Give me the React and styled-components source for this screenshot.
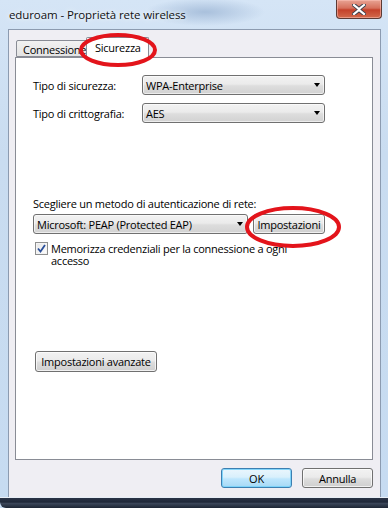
import styled, { createGlobalStyle } from "styled-components";

const GlobalStyle = createGlobalStyle`
  html, body {
    margin: 0;
    padding: 0;
    background: #1d2634;
  }
  body {
    font-family: "Open Sans", "Noto Sans", sans-serif;
    font-size: 11px;
    letter-spacing: -0.25px;
    color: #000;
  }
`;

const App = () => {
  return (
    <>
      <GlobalStyle />
      <Window>
        <TitleBar>
          <Title>eduroam - Proprietà rete wireless</Title>
          <CloseButton>
            <svg width="14" height="11" viewBox="0 0 14 11">
              <path
                d="M2 1 L7 5 L12 1 M2 10 L7 6 L12 10"
                stroke="#3a3f4a"
                strokeWidth="4"
                fill="none"
                strokeLinecap="square"
              />
              <path
                d="M2 1 L7 5 L12 1 M2 10 L7 6 L12 10"
                stroke="#fff"
                strokeWidth="2.2"
                fill="none"
                strokeLinecap="square"
              />
            </svg>
          </CloseButton>
        </TitleBar>
        <Client>
          <TabStrip>
            <Tab>Connessione</Tab>
            <Tab $active>
              Sicurezza
              <Circle $w={78} $h={34} $left={-8} $top={-5}>
                <ellipse cx="39" cy="17" rx="37" ry="15" />
              </Circle>
            </Tab>
          </TabStrip>
          <Panel>
            <FieldRow>
              <Label>Tipo di sicurezza:</Label>
              <Combo $width={183}>
                WPA-Enterprise
                <Arrow />
              </Combo>
            </FieldRow>
            <FieldRow $gap={8}>
              <Label>Tipo di crittografia:</Label>
              <Combo $width={183}>
                AES
                <Arrow />
              </Combo>
            </FieldRow>
            <MethodLabel>Scegliere un metodo di autenticazione di rete:</MethodLabel>
            <MethodRow>
              <Combo $width={215}>
                Microsoft: PEAP (Protected EAP)
                <Arrow />
              </Combo>
              <Button $width={72} $height={20}>
                Impostazioni
                <Circle $w={96} $h={42} $left={-9} $top={-9}>
                  <ellipse cx="48" cy="21" rx="46" ry="19" />
                </Circle>
              </Button>
            </MethodRow>
            <CheckRow>
              <CheckBox>
                <svg width="9" height="9" viewBox="0 0 9 9">
                  <path
                    d="M1 4.5 L3.5 7.5 L8 1"
                    stroke="#2a4f9a"
                    strokeWidth="1.8"
                    fill="none"
                  />
                </svg>
              </CheckBox>
              <CheckText>
                Memorizza credenziali per la connessione a ogni accesso
              </CheckText>
            </CheckRow>
            <Button $width={122} $height={21} $margin="84px 0 0 2px">
              Impostazioni avanzate
            </Button>
          </Panel>
          <Footer>
            <Button $width={71} $height={20} $default>
              OK
            </Button>
            <Button $width={71} $height={20}>
              Annulla
            </Button>
          </Footer>
        </Client>
        <BottomEdge />
      </Window>
    </>
  );
};

const Window = styled.div`
  width: 388px;
  height: 508px;
  display: flex;
  flex-direction: column;
  background: radial-gradient(ellipse 60px 14px at 205px 12px, #a9c0dc, transparent),
    linear-gradient(180deg, #d5e5f6 0%, #c9dcf0 30%, #c6dbf1 100%);
  overflow: hidden;
`;

const TitleBar = styled.div`
  height: 29px;
  display: flex;
  justify-content: space-between;
  align-items: flex-start;
  padding: 0 6px 0 9px;
  box-sizing: border-box;
`;

const Title = styled.span`
  font-size: 11.5px;
  letter-spacing: -0.1px;
  line-height: 14px;
  margin-top: 8px;
  color: #111;
  text-shadow: 0 0 6px #eef5fc, 0 0 3px #eef5fc;
`;

const CloseButton = styled.div`
  width: 46px;
  height: 19px;
  box-sizing: border-box;
  display: flex;
  align-items: center;
  justify-content: center;
  border: 1px solid #5c3a34;
  border-top: none;
  border-radius: 0 0 4px 4px;
  background: linear-gradient(180deg, #e8a494 0%, #d6705c 45%, #c4412a 55%, #d26a4c 100%);
  box-shadow: inset 0 0 0 1px rgba(255, 200, 190, 0.5);
`;

const Client = styled.div`
  height: 468px;
  margin: 0 7px 0 8px;
  box-sizing: border-box;
  border: 1px solid #8c9bb0;
  border-bottom: none;
  background: #efeef3;
  padding: 7px 7px 0 6px;
  display: flex;
  flex-direction: column;
`;

const TabStrip = styled.div`
  display: flex;
  align-items: flex-end;
  height: 20px;
  padding-left: 1px;
  position: relative;
  z-index: 1;
`;

const Tab = styled.div`
  position: relative;
  box-sizing: border-box;
  height: ${(p) => (p.$active ? "21px" : "17px")};
  padding: ${(p) => (p.$active ? "2px 7px 0 8px" : "1px 6px 0 6px")};
  margin-left: ${(p) => (p.$active ? "-2px" : "0")};
  margin-bottom: ${(p) => (p.$active ? "-1px" : "0")};
  border: 1px solid #898c95;
  border-bottom: ${(p) => (p.$active ? "none" : "1px solid #898c95")};
  border-radius: 2px 2px 0 0;
  background: ${(p) =>
    p.$active ? "#ffffff" : "linear-gradient(180deg, #f2f2f2 0%, #e3e3e3 100%)"};
  z-index: ${(p) => (p.$active ? 2 : 1)};
  font-size: 11px;
  line-height: 15px;
  width: ${(p) => (p.$active ? "auto" : "72px")};
  overflow: visible;
  white-space: nowrap;
`;

const Circle = styled.svg.attrs((p) => ({
  width: p.$w,
  height: p.$h,
  viewBox: `0 0 ${p.$w} ${p.$h}`,
}))`
  position: absolute;
  left: ${(p) => p.$left}px;
  top: ${(p) => p.$top}px;
  pointer-events: none;
  overflow: visible;
  z-index: 5;
  ellipse {
    fill: none;
    stroke: #e3141b;
    stroke-width: 4;
  }
`;

const Panel = styled.div`
  width: 358px;
  height: 403px;
  box-sizing: border-box;
  border: 1px solid #898c95;
  background: #fff;
  padding: 17px 0 0 17px;
  display: flex;
  flex-direction: column;
  align-items: flex-start;
`;

const FieldRow = styled.div`
  display: flex;
  align-items: center;
  margin-top: ${(p) => p.$gap || 0}px;
`;

const Label = styled.span`
  width: 109px;
  line-height: 15px;
`;

const Combo = styled.div`
  position: relative;
  width: ${(p) => p.$width}px;
  height: 20px;
  box-sizing: border-box;
  border: 1px solid #707070;
  border-radius: 3px;
  background: linear-gradient(180deg, #f2f2f2 0%, #ebebeb 45%, #dddddd 55%, #d2d2d2 100%);
  box-shadow: inset 0 0 0 1px rgba(255, 255, 255, 0.6);
  padding-left: 3px;
  display: flex;
  align-items: center;
  line-height: 15px;
`;

const Arrow = styled.span`
  position: absolute;
  right: 4px;
  top: 7px;
  width: 0;
  height: 0;
  border-left: 3.5px solid transparent;
  border-right: 3.5px solid transparent;
  border-top: 4px solid #000;
`;

const MethodLabel = styled.div`
  margin-top: 73px;
  line-height: 15px;
`;

const MethodRow = styled.div`
  display: flex;
  gap: 5px;
  margin-top: 3px;
`;

const Button = styled.div`
  position: relative;
  width: ${(p) => p.$width}px;
  height: ${(p) => p.$height}px;
  margin: ${(p) => p.$margin || 0};
  box-sizing: border-box;
  border: 1px solid ${(p) => (p.$default ? "#3c7fb1" : "#707070")};
  border-radius: 3px;
  background: ${(p) =>
    p.$default
      ? "linear-gradient(180deg, #eaf6fd 0%, #d9f0fc 45%, #bee6fd 55%, #a7d9f5 100%)"
      : "linear-gradient(180deg, #f2f2f2 0%, #ebebeb 45%, #dddddd 55%, #cfcfcf 100%)"};
  box-shadow: inset 0 0 0 1px
    ${(p) => (p.$default ? "rgba(120, 210, 250, 0.9)" : "rgba(255, 255, 255, 0.7)")};
  display: flex;
  align-items: center;
  justify-content: center;
  line-height: 15px;
  white-space: nowrap;
`;

const CheckRow = styled.div`
  display: flex;
  align-items: flex-start;
  margin-top: 8px;
  padding-left: 2px;
`;

const CheckBox = styled.div`
  width: 13px;
  height: 13px;
  box-sizing: border-box;
  border: 1px solid #8e8f8f;
  background: linear-gradient(135deg, #e6e6e6 0%, #f4f4f4 60%, #ffffff 100%);
  box-shadow: inset 0 0 0 1px #f4f4f4;
  display: flex;
  align-items: center;
  justify-content: center;
  flex-shrink: 0;
`;

const CheckText = styled.span`
  width: 240px;
  margin-left: 3px;
  margin-top: 1px;
  line-height: 12px;
`;

const Footer = styled.div`
  display: flex;
  justify-content: flex-end;
  gap: 10px;
  margin-top: 8px;
`;

const BottomEdge = styled.div`
  flex: 1;
  border-top: 1px solid #e8eef6;
  border-bottom-left-radius: 6px;
  background: linear-gradient(180deg, #2a3446 0%, #1f2838 40%, #3a4558 55%, #1d2634 100%);
`;

export default App;
